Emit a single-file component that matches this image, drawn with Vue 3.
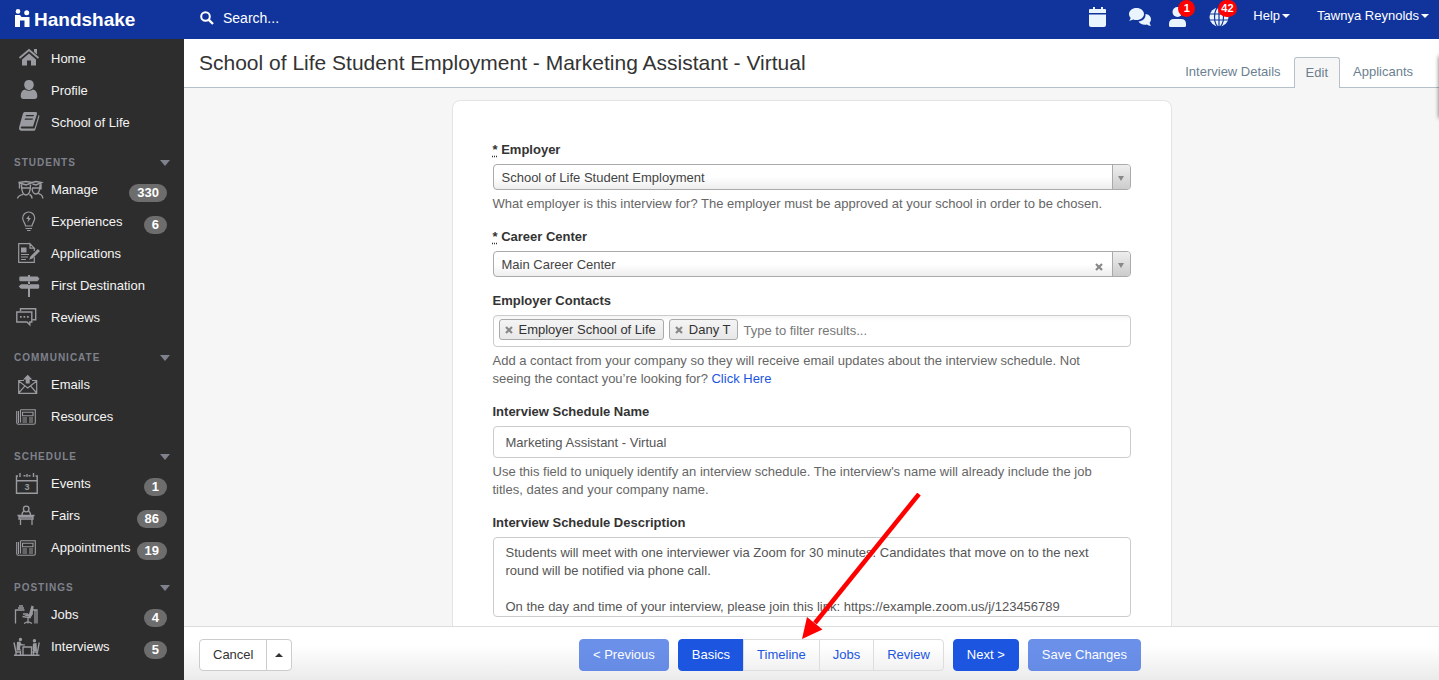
<script setup>
import { ref } from 'vue'

const topLinks = [
  { label: 'Home', icon: 'home' },
  { label: 'Profile', icon: 'profile' },
  { label: 'School of Life', icon: 'book' },
]

const sections = [
  {
    title: 'Students',
    links: [
      { label: 'Manage', icon: 'students', count: 330 },
      { label: 'Experiences', icon: 'bulb', count: 6 },
      { label: 'Applications', icon: 'application' },
      { label: 'First Destination', icon: 'signpost' },
      { label: 'Reviews', icon: 'reviews' },
    ],
  },
  {
    title: 'Communicate',
    links: [
      { label: 'Emails', icon: 'email' },
      { label: 'Resources', icon: 'news' },
    ],
  },
  {
    title: 'Schedule',
    links: [
      { label: 'Events', icon: 'calendar', count: 1 },
      { label: 'Fairs', icon: 'fair', count: 86 },
      { label: 'Appointments', icon: 'news', count: 19 },
    ],
  },
  {
    title: 'Postings',
    links: [
      { label: 'Jobs', icon: 'desk', count: 4 },
      { label: 'Interviews', icon: 'interview', count: 5 },
    ],
  },
]

const groups = [{ title: '', links: topLinks }, ...sections]

// Stroked (s) and filled (f) outlines on a 32 x 32 grid
const icons = {
  home: {
    s: 'M7.500 15 17 7l9.500 8',
    f: 'M17 10.500 24 16.500v6h-5v-5h-4v5h-5v-6zM22 6h3v5.500l-3-2.500z',
    w: 1.800,
  },
  profile: {
    f: 'M17 5c3 0 4.800 2 4.800 4.700S19.800 15 17 15s-4.800-2.600-4.800-5.300S14 5 17 5zM13 14.500c2.400 1.600 5.600 1.600 8 0 3 .6 4.300 3.200 4.300 6.500 0 2-1 3-2.800 3h-11c-1.800 0-2.800-1-2.800-3 0-3.300 1.300-5.900 4.300-6.500z',
  },
  book: {
    f: 'M12.500 5h11c1.300 0 1.900.8 1.500 2l-4 12.500H10c-1.600 0-1.800 2 0 2h12.500L26.600 8c.8.400.9 1 .6 2l-3.700 12.200c-.3 1-1 1.600-2.200 1.600H9.600C7.500 23.800 6.600 22 7.200 20l3.600-12.900C11.100 6 11.700 5 12.500 5zm1.500 3-.4 1.300h8l.4-1.300zm-1 3.500-.4 1.300h8l.4-1.300z',
  },
  students: {
    s: 'M6.500 8.500 14 7.500l6.500 1-6.500 2.500zM9.500 10.500c0 6 1.500 10.500 4.500 10.500s4.500-4.500 4.500-10.500M7.500 9v5.500M9.500 14h9M11 20.500c-3 .7-5 1-5.500 4M17.500 20.500c2 .7 2.500 1.500 2.500 4M20 8.500l4-1 5.500 1-5.500 2.500-3.500-1M20 14.500c.5 4.500 1.700 5.500 4 5.500 3 0 4-4 4-9.500M29 9.500v6M20 14h8M26.500 19.500c2.500 1 4 1.500 4.300 5',
    w: 1.4,
  },
  bulb: {
    s: 'M13.500 20c0-3-2.800-4-2.800-8a6 6 0 0 1 12 0c0 4-2.700 5-2.700 8zM13.500 22.500H20M15 24.500h3.500',
    f: 'M17.500 9l-3.500 4h2.200l-.8 3.500 3.600-4.500h-2.200z',
    w: 1.2,
  },
  application: {
    s: 'M18 5.700H6.700v18.600h15.600V19M18 5.700v4.500h4.300zM22.300 10v3M9 16.500h8M9 19h7M9 21.500h5',
    f: 'M9 9.500h5.500v5H9zM25.800 11l2.200 2-7.500 7.500-3.300 1.300 1.200-3.300z',
    w: 1.2,
  },
  signpost: {
    f: 'M16 5h2v1.500h7.500l2 2.300-2 2.500H8.500c-.8 0-1.200-.4-1.200-1.200V7.700c0-.8.400-1.200 1.200-1.200H16zM9 14.200h17c.8 0 1.200.4 1.200 1.200v2.200c0 .8-.4 1.200-1.200 1.200h-8V27h-2v-8.200H9l-2.300-2.300zM16 11h2v4h-2z',
  },
  reviews: {
    s: 'M8.500 9V6.800h15.200v11h-3M4.800 10h15v10h-2v2.800L15 20H4.800z',
    f: 'M8 14h1.700v1.700H8zm3.500 0h1.700v1.700h-1.700zm3.500 0h1.700v1.700H15z',
    w: 1.4,
  },
  email: {
    s: 'M12 11.500H6.700v12.800h18V11.500H20M6.700 12l9 7 9-7M6.700 24l6-6.800M24.700 24l-6-6.800',
    f: 'M15.700 5.800l4.600 4.700h-2.600v4h-4v-4h-2.600z',
    w: 1.2,
  },
  news: {
    s: 'M8.500 8.700h14.800v13c0 1-.5 1.600-1.500 1.600H6.500c-1.200 0-1.800-.7-1.800-1.800V10M8.500 8.700v12.800M6.500 10v12M10.500 11.200H21v3.600H10.500zM10.500 17h4.500M17 17h4M10.500 19h4.500M17 19h4M10.500 21h4.500M17 21h4',
    w: 1.1,
  },
  calendar: {
    s: 'M6 8H4.500v17.300h20.700V8H23.500M4.500 12.700h20.700M8 5v4M11.500 7.700h2M16.500 7.700h2M21.500 5v4M15 6v3',
    w: 1.4,
    text: '3',
  },
  fair: {
    s: 'M17 9a2.800 2.800 0 1 1-5.600 0 2.800 2.800 0 1 1 5.600 0zM10 15c0-2.500 1-3.500 2.500-3.800M18.500 15c0-2.500-1-3.500-2.500-3.800M5.500 15.500h17M7 17h14v2H7zM8.500 19v6M20 19v6',
    w: 1.3,
  },
  desk: {
    s: 'M3.500 24.500V11h9M19 11h6v13.500M23 11v13.500M6 9h6M7 7h4M12 24.500l4-2 4 2M16 19v5.500M10.500 17.500l7.500 1.300 2.500-5M11 15h5',
    f: 'M19.500 6.500l2.200 1-1.300 8.500-2.400 2.300-6-1.800 5-1.500z',
    w: 1.3,
  },
  interview: {
    s: 'M2 11.500 4 21h5M27.200 11.500 25.500 21h-5M2 24.300h25.500M10.500 16h9.500M11 16v8M19.500 16v8M4 21v3M25 21v3M8.500 20v4M21.500 20v4',
    f: 'M8.500 6.800a1.700 1.700 0 1 1-.1 3.400 1.700 1.700 0 0 1 .1-3.400zM22.500 8a1.700 1.700 0 1 1-.1 3.400 1.700 1.700 0 0 1 .1-3.400zM5 11l3-.5 1.500 2.500 3.500.5v1l-4.500 0-.5 3 1.500 2H4.500zM21 12.500l3.500-.5.5 8h-4l-.5-3z',
    w: 1.4,
  },
}

const employer = ref('School of Life Student Employment')
const center = ref('Main Career Center')
const contacts = ref(['Employer School of Life', 'Dany T'])
const scheduleName = ref('Marketing Assistant - Virtual')
const description = ref(
  'Students will meet with one interviewer via Zoom for 30 minutes. Candidates that move on to the next round will be notified via phone call.\n\nOn the day and time of your interview, please join this link: https://example.zoom.us/j/123456789'
)
const steps = ['Basics', 'Timeline', 'Jobs', 'Review']
const activeStep = ref('Basics')
</script>

<template>
  <div class="app">
    <header class="topbar">
      <a class="brand" href="#">
        <svg width="16" height="19" viewBox="0 0 16 19" fill="#fff" aria-hidden="true">
          <circle cx="3" cy="2.400" r="2.300" />
          <circle cx="11.700" cy="3.800" r="2.500" />
          <path d="M0 6h5l1.500 2H14.500v10H9.500v-6.500H5V18H0z" />
        </svg>
        <span>Handshake</span>
      </a>
      <label class="search">
        <svg width="14" height="14" viewBox="0 0 14 14" fill="none" stroke="#fff" aria-hidden="true">
          <circle cx="5.500" cy="5.500" r="4.300" stroke-width="2" />
          <path d="M8.800 8.800 13 13" stroke-width="2.400" />
        </svg>
        <input type="search" placeholder="Search..." aria-label="Search" />
      </label>
      <nav class="tools">
        <button class="tool" type="button" aria-label="Calendar">
          <svg width="18" height="20" viewBox="0 0 18 20" fill="#eaf4ff">
            <path d="M4 0h2v2h6V0h2v2h2q1 0 1 1v3H0V3q0-1 1-1h3zM0 7.500h17V18q0 2-2 2H2q-2 0-2-2z" />
          </svg>
        </button>
        <button class="tool" type="button" aria-label="Messages">
          <svg width="22" height="20" viewBox="0 0 22 20" fill="#eaf4ff">
            <path d="M7.500 1c4.300 0 7.500 2.700 7.500 6s-3.200 6-7.500 6c-1.200 0-2.200-.2-3.200-.6L0 14c1-1.200 1.500-2.200 1.600-3.300C.6 9.700 0 8.400 0 7c0-3.300 3.200-6 7.500-6z" />
            <path d="M16.500 7c3.200.3 5.500 2.500 5.500 5.300 0 1.300-.5 2.500-1.400 3.400.2 1 .6 2 1.400 3-1.600 0-3-.5-4-1.300-3.900.8-7.300-.6-8.500-3 4-.1 7-3 7-6.400z" />
          </svg>
        </button>
        <button class="tool" type="button" aria-label="Followers">
          <svg width="18" height="20" viewBox="0 0 18 20" fill="#eaf4ff">
            <circle cx="8.500" cy="5" r="5" />
            <path d="M5 12h7q5 0 5 5v1.500q0 1.500-1.500 1.500h-14Q0 20 0 18.500V17q0-5 5-5z" />
          </svg>
          <span class="alert">1</span>
        </button>
        <button class="tool" type="button" aria-label="Notifications">
          <svg width="20" height="20" viewBox="0 0 20 20">
            <circle cx="10" cy="10" r="9.500" fill="#eaf4ff" />
            <path d="M0 7h20M0 13h20M10 0v20" stroke="#10349b" stroke-width="1.200" />
            <ellipse cx="10" cy="10" rx="4.500" ry="9.800" fill="none" stroke="#10349b" stroke-width="1.200" />
          </svg>
          <span class="alert">42</span>
        </button>
        <button class="menu help" type="button">Help<i class="caret"></i></button>
        <button class="menu" type="button">Tawnya Reynolds<i class="caret"></i></button>
      </nav>
    </header>

    <div class="body">
      <aside class="sidebar">
        <nav v-for="group in groups" :key="group.title">
          <button v-if="group.title" class="section" type="button">
            {{ group.title }}<i class="fold"></i>
          </button>
          <a v-for="link in group.links" :key="link.label" class="link" href="#">
            <svg width="32" height="32" viewBox="0 0 32 32" aria-hidden="true">
              <path
                v-if="icons[link.icon].s"
                :d="icons[link.icon].s"
                fill="none"
                stroke="#9a9ba0"
                :stroke-width="icons[link.icon].w"
              />
              <path v-if="icons[link.icon].f" :d="icons[link.icon].f" fill="#9a9ba0" fill-rule="evenodd" />
              <text v-if="icons[link.icon].text" x="15" y="22" text-anchor="middle" class="glyph">
                {{ icons[link.icon].text }}
              </text>
            </svg>
            <span>{{ link.label }}</span>
            <b v-if="link.count" class="count">{{ link.count }}</b>
          </a>
        </nav>
      </aside>

      <main class="main">
        <div class="titlebar">
          <h1>School of Life Student Employment - Marketing Assistant - Virtual</h1>
          <nav class="tabs">
            <a href="#">Interview Details</a>
            <a href="#" class="current" aria-current="page">Edit</a>
            <a href="#">Applicants</a>
          </nav>
        </div>
        <div class="drawer"></div>

        <div class="content">
          <form class="card" @submit.prevent>
            <div class="field">
              <label for="employer"><abbr title="required">*</abbr> Employer</label>
              <div class="picker">
                <select id="employer" v-model="employer">
                  <option>School of Life Student Employment</option>
                </select>
                <span class="open"></span>
              </div>
              <p>What employer is this interview for? The employer must be approved at your school in order to be chosen.</p>
            </div>
            <div class="field">
              <label for="center"><abbr title="required">*</abbr> Career Center</label>
              <div class="picker">
                <select id="center" v-model="center">
                  <option>Main Career Center</option>
                </select>
                <button class="cross clear" type="button" aria-label="Clear career center">
                  <svg width="8" height="8" viewBox="0 0 8 8"><path d="M1 1l6 6M7 1 1 7" /></svg>
                </button>
                <span class="open"></span>
              </div>
            </div>
            <div class="field">
              <label for="contacts">Employer Contacts</label>
              <div class="tags">
                <span v-for="contact in contacts" :key="contact" class="tag">
                  <button class="cross" type="button" :aria-label="'Remove ' + contact">
                    <svg width="8" height="8" viewBox="0 0 8 8"><path d="M1 1l6 6M7 1 1 7" /></svg>
                  </button>
                  {{ contact }}
                </span>
                <input id="contacts" type="text" placeholder="Type to filter results..." />
              </div>
              <p>
                Add a contact from your company so they will receive email updates about the interview schedule. Not<br />
                seeing the contact you’re looking for? <a href="#">Click Here</a>
              </p>
            </div>
            <div class="field">
              <label for="name">Interview Schedule Name</label>
              <input id="name" v-model="scheduleName" class="box" type="text" />
              <p>
                Use this field to uniquely identify an interview schedule. The interview's name will already include the job<br />
                titles, dates and your company name.
              </p>
            </div>
            <div class="field">
              <label for="description">Interview Schedule Description</label>
              <textarea id="description" v-model="description" class="box"></textarea>
              <p>Any additional information about the interview schedule that you would like students to know.</p>
            </div>
          </form>
        </div>

        <footer class="actions">
          <div class="group">
            <button class="btn plain" type="button">Cancel</button>
            <button class="btn plain more" type="button" aria-label="More options"><i class="caret up"></i></button>
          </div>
          <div class="steps">
            <button class="btn primary faded" type="button">&lt; Previous</button>
            <div class="group">
              <button
                v-for="step in steps"
                :key="step"
                class="btn"
                :class="step === activeStep ? 'primary' : 'step'"
                type="button"
                @click="activeStep = step"
              >
                {{ step }}
              </button>
            </div>
            <button class="btn primary" type="button">Next &gt;</button>
            <button class="btn primary faded" type="button">Save Changes</button>
          </div>
        </footer>

        <svg class="pointer" width="120" height="148" viewBox="0 0 120 148" aria-hidden="true">
          <path d="M118 1 14 130" stroke="#f00" stroke-width="4.500" fill="none" />
          <path d="M1 146 6 124 21.500 136.500z" fill="#f00" />
        </svg>
      </main>
    </div>
  </div>
</template>

<style>
body {
  margin: 0;
}
</style>

<style scoped>
.app {
  display: flex;
  flex-direction: column;
  height: 100vh;
  overflow: hidden;
  font: 13px/18px "Liberation Sans", Arial, sans-serif;
  color: #333;
}
.app * {
  box-sizing: border-box;
}
a {
  text-decoration: none;
}
button,
input,
select,
textarea {
  font: inherit;
  color: inherit;
  margin: 0;
}
button {
  cursor: pointer;
}

.topbar {
  flex: none;
  display: flex;
  height: 39px;
  background: #10349b;
  color: #fff;
}
.brand {
  display: flex;
  gap: 3px;
  width: 200px;
  padding: 9px 0 0 15px;
  color: #fff;
  font-size: 19px;
  line-height: 22px;
  font-weight: 700;
}
.search {
  flex: 1;
  display: flex;
  align-items: center;
  gap: 9px;
  padding-bottom: 4px;
}
.search input {
  flex: 1;
  border: 0;
  padding: 0;
  outline: 0;
  background: none;
  font-size: 14px;
}
.search input::placeholder {
  color: #fff;
  opacity: 1;
}
.tools {
  display: flex;
  padding-right: 10px;
}
.tool,
.menu,
.section {
  border: 0;
  padding: 0;
  background: none;
  color: #fff;
}
.tool {
  position: relative;
  width: 40px;
  height: 34px;
  text-align: left;
}
.tool svg {
  display: block;
}
.alert {
  position: absolute;
  left: 9px;
  top: 0;
  min-width: 17px;
  padding: 0 3px;
  border-radius: 9px;
  background: #f00;
  font-size: 11px;
  line-height: 17px;
  font-weight: 600;
  text-align: center;
}
.menu {
  display: flex;
  align-items: center;
  gap: 2px;
  height: 32px;
}
.help {
  margin: 0 27px 0 4px;
}
.caret {
  border: 4px solid transparent;
  border-top-color: currentColor;
  border-bottom: 0;
}
.caret.up {
  border-top: 0;
  border-bottom: 4px solid currentColor;
}

.body {
  flex: 1;
  min-height: 0;
  display: flex;
}
.sidebar {
  flex: none;
  width: 184px;
  padding-top: 4px;
  background: #2d2d2d;
}
.section {
  display: flex;
  align-items: center;
  justify-content: space-between;
  width: 100%;
  height: 35px;
  padding: 12px 14px 0;
  color: #7f818c;
  font-size: 10px;
  font-weight: 600;
  letter-spacing: 1px;
  text-transform: uppercase;
}
.fold {
  border: 5px solid transparent;
  border-top: 6px solid #7f818c;
  border-bottom: 0;
}
.link {
  display: flex;
  align-items: center;
  height: 32px;
  padding: 0 17px 0 12px;
  color: #f4f4f4;
  font-weight: 500;
}
.link svg {
  flex: none;
  margin-right: 7px;
}
.glyph {
  fill: #9a9ba0;
  font-size: 9px;
  font-weight: 700;
}
.count {
  margin: 6px 0 0 auto;
  padding: 0 8px;
  border-radius: 9px;
  background: #6d6d6d;
  color: #fff;
  font-weight: 700;
}

.main {
  position: relative;
  flex: 1;
  min-width: 0;
  display: flex;
  flex-direction: column;
  background: #f6f6f6;
}
.titlebar {
  flex: none;
  display: flex;
  justify-content: space-between;
  height: 49px;
  padding: 0 13px 0 15px;
  border-bottom: 1px solid #b4c0ca;
  background: #fff;
}
h1 {
  margin: 0;
  font-size: 21px;
  line-height: 48px;
  font-weight: 400;
}
.tabs {
  display: flex;
  padding-top: 18px;
}
.tabs a {
  height: 31px;
  padding: 6px 13px 0;
  color: #6b7f90;
}
.tabs .current {
  padding: 6px 11px 0;
  border: 1px solid #b4c0ca;
  border-bottom: 0;
  border-radius: 3px 3px 0 0;
  background: #f6f6f6;
}
.drawer {
  position: absolute;
  top: 17px;
  right: -4px;
  width: 4px;
  height: 62px;
  box-shadow: 0 0 4px rgba(0, 0, 0, 0.6);
}
.content {
  flex: 1;
  min-height: 0;
  overflow: hidden;
  padding: 12px 20px 0;
}
.card {
  max-width: 720px;
  margin: 0 auto;
  padding: 39px 40px 40px;
  border: 1px solid #e4e4e4;
  border-radius: 8px;
  background: #fff;
}
.field {
  margin-bottom: 14px;
}
.field label {
  display: block;
  padding-top: 1px;
  margin-bottom: 5px;
  font-weight: 600;
}
abbr {
  text-decoration: underline dotted;
  text-underline-offset: 2px;
}
.field p {
  margin: 5px 0 0;
  color: #666;
}
.field p a {
  color: #1c56e0;
}
.picker {
  position: relative;
}
.picker select {
  display: block;
  appearance: none;
  width: 100%;
  height: 26px;
  padding: 1px 40px 0 8px;
  border: 1px solid #aaa;
  border-radius: 4px;
  background: linear-gradient(#fff 50%, #eee);
  color: #444;
}
.open {
  position: absolute;
  top: 1px;
  right: 1px;
  bottom: 1px;
  display: flex;
  align-items: center;
  justify-content: center;
  width: 18px;
  padding-top: 3px;
  border-left: 1px solid #aaa;
  border-radius: 0 3px 3px 0;
  background: linear-gradient(#eee, #ccc);
  pointer-events: none;
}
.open::after {
  content: "";
  border: 3px solid transparent;
  border-top: 5px solid #888;
  border-bottom: 0;
}
.cross {
  display: block;
  border: 0;
  padding: 0;
  background: none;
}
.cross svg {
  display: block;
}
.cross path {
  stroke: #888;
  stroke-width: 2.2;
}
.clear {
  position: absolute;
  top: 12px;
  right: 28px;
}
.tags {
  display: flex;
  align-items: center;
  gap: 5px;
  height: 32px;
  padding: 0 5px 3px;
  border: 1px solid #ccc;
  border-radius: 4px;
  background: linear-gradient(#f4f4f4, #fff 5px);
}
.tag {
  display: flex;
  align-items: center;
  gap: 6px;
  padding: 0 7px 0 5px;
  height: 21px;
  border: 1px solid #aaa;
  border-radius: 3px;
  background: linear-gradient(#f4f4f4, #e8e8e8);
  white-space: nowrap;
}
.tags input {
  flex: 1;
  min-width: 0;
  padding: 2px 0 0;
  border: 0;
  outline: 0;
  background: none;
}
.tags input::placeholder {
  color: #777;
}
.box {
  display: block;
  width: 100%;
  height: 32px;
  padding: 6px 12px;
  border: 1px solid #ccc;
  border-radius: 4px;
  background: #fff;
  color: #555;
}
textarea.box {
  height: 80px;
  resize: none;
  overflow: hidden;
}

.actions {
  flex: none;
  display: grid;
  grid-template-columns: 380px 1fr;
  height: 54px;
  padding: 12px 15px 0;
  border-top: 1px solid #ddd;
  background: linear-gradient(#fff 35%, #ebebeb);
}
.group,
.steps {
  display: flex;
}
.steps {
  gap: 9px;
}
.btn {
  height: 32px;
  padding: 0 13px;
  border: 1px solid #ddd;
  border-radius: 4px;
  background: none;
  white-space: nowrap;
}
.group .btn:not(:first-child) {
  margin-left: -1px;
  border-top-left-radius: 0;
  border-bottom-left-radius: 0;
}
.group .btn:not(:last-child) {
  border-top-right-radius: 0;
  border-bottom-right-radius: 0;
}
.plain {
  border-color: #ccc;
  background: #fff;
}
.group .more {
  display: flex;
  align-items: center;
  justify-content: center;
  width: 26px;
  padding: 0;
}
.primary {
  border-color: #1c56e0;
  background: #1c56e0;
  color: #fff;
}
.step {
  color: #1c56e0;
}
.faded {
  opacity: 0.65;
}
.pointer {
  position: absolute;
  left: 617px;
  top: 454px;
  pointer-events: none;
}
</style>
